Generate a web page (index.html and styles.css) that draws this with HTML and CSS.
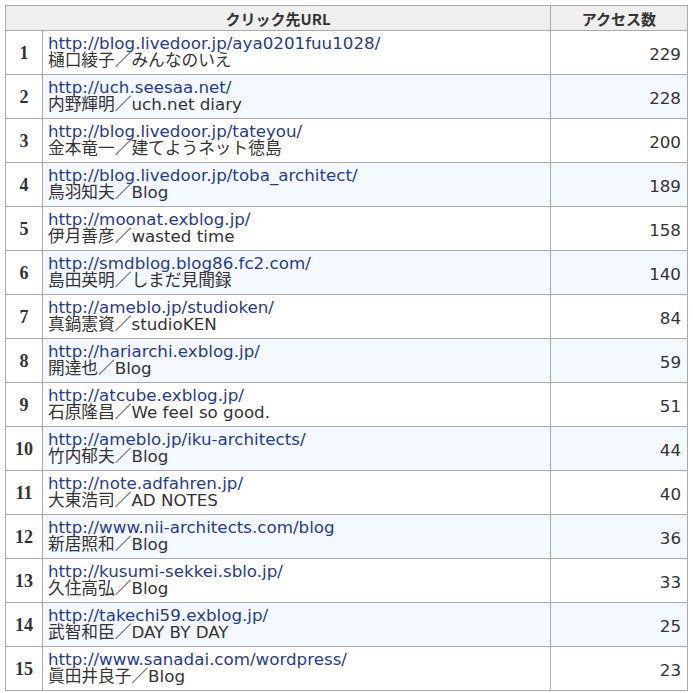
FILE: index.html
```html
<!DOCTYPE html>
<html lang="ja">
<head>
<meta charset="utf-8">
<link rel="stylesheet" href="styles.css">
</head>
<body>
<table class="ranking">
<colgroup>
<col class="c-num">
<col class="c-url">
<col class="c-count">
</colgroup>
<thead>
<tr><th colspan="2">クリック先URL</th><th>アクセス数</th></tr>
</thead>
<tbody>
<tr><td class="num">1</td><td class="url"><a href="#">http://blog.livedoor.jp/aya0201fuu1028/</a><br>樋口綾子／みんなのいえ</td><td class="count">229</td></tr>
<tr class="alt"><td class="num">2</td><td class="url"><a href="#">http://uch.seesaa.net/</a><br>内野輝明／uch.net diary</td><td class="count">228</td></tr>
<tr><td class="num">3</td><td class="url"><a href="#">http://blog.livedoor.jp/tateyou/</a><br>金本竜一／建てようネット徳島</td><td class="count">200</td></tr>
<tr class="alt"><td class="num">4</td><td class="url"><a href="#">http://blog.livedoor.jp/toba_architect/</a><br>鳥羽知夫／Blog</td><td class="count">189</td></tr>
<tr><td class="num">5</td><td class="url"><a href="#">http://moonat.exblog.jp/</a><br>伊月善彦／wasted time</td><td class="count">158</td></tr>
<tr class="alt"><td class="num">6</td><td class="url"><a href="#">http://smdblog.blog86.fc2.com/</a><br>島田英明／しまだ見聞録</td><td class="count">140</td></tr>
<tr><td class="num">7</td><td class="url"><a href="#">http://ameblo.jp/studioken/</a><br>真鍋憲資／studioKEN</td><td class="count">84</td></tr>
<tr class="alt"><td class="num">8</td><td class="url"><a href="#">http://hariarchi.exblog.jp/</a><br>開達也／Blog</td><td class="count">59</td></tr>
<tr><td class="num">9</td><td class="url"><a href="#">http://atcube.exblog.jp/</a><br>石原隆昌／We feel so good.</td><td class="count">51</td></tr>
<tr class="alt"><td class="num">10</td><td class="url"><a href="#">http://ameblo.jp/iku-architects/</a><br>竹内郁夫／Blog</td><td class="count">44</td></tr>
<tr><td class="num">11</td><td class="url"><a href="#">http://note.adfahren.jp/</a><br>大東浩司／AD NOTES</td><td class="count">40</td></tr>
<tr class="alt"><td class="num">12</td><td class="url"><a href="#">http://www.nii-architects.com/blog</a><br>新居照和／Blog</td><td class="count">36</td></tr>
<tr><td class="num">13</td><td class="url"><a href="#">http://kusumi-sekkei.sblo.jp/</a><br>久住高弘／Blog</td><td class="count">33</td></tr>
<tr class="alt"><td class="num">14</td><td class="url"><a href="#">http://takechi59.exblog.jp/</a><br>武智和臣／DAY BY DAY</td><td class="count">25</td></tr>
<tr><td class="num">15</td><td class="url"><a href="#">http://www.sanadai.com/wordpress/</a><br>眞田井良子／Blog</td><td class="count">23</td></tr>
</tbody>
</table>
</body>
</html>
```

FILE: styles.css
```css
html, body {
  margin: 0;
  padding: 0;
  background: #ffffff;
}
body {
  padding: 5px 0 0 5px;
  font-family: "DejaVu Sans", "Noto Sans CJK JP", sans-serif;
  font-size: 16.7px;
  color: #333333;
}
.ranking {
  border-collapse: collapse;
  width: 682px;
  table-layout: fixed;
}
.c-num { width: 37px; }
.c-url { width: 508px; }
.c-count { width: 137px; }
.ranking th,
.ranking td {
  border: 1px solid #aaaaaa;
  padding: 0;
}
.ranking th {
  background: #efefef;
  height: 24px;
  font-family: "Noto Sans CJK JP", sans-serif;
  font-weight: bold;
  font-size: 15px;
  color: #333333;
  text-align: center;
  vertical-align: middle;
}
.ranking td {
  height: 41px;
  vertical-align: middle;
}
.ranking td.num {
  background: #ffffff;
  text-align: center;
  font-family: "Liberation Serif", serif;
  font-weight: bold;
  font-size: 18px;
  color: #333333;
  padding-top: 2px;
}
.ranking td.url {
  padding: 0 0 2px 5px;
  line-height: 17px;
  white-space: nowrap;
  overflow: hidden;
}
.ranking td.url a {
  color: #263a92;
  text-decoration: none;
}
.ranking td.count {
  text-align: right;
  padding: 2px 6px 0 0;
}
.ranking tr.alt td.url,
.ranking tr.alt td.count {
  background: #f4f9ff;
}
```
